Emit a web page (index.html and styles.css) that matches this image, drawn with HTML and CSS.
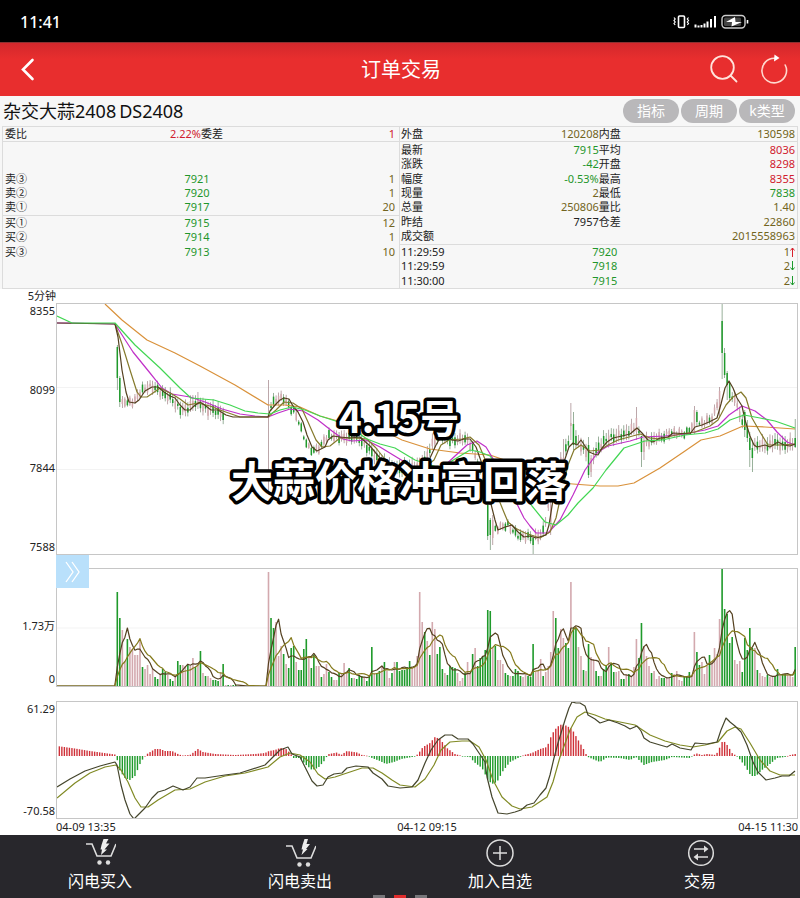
FILE: index.html
```html
<!DOCTYPE html>
<html lang="zh-CN">
<head>
    <meta charset="UTF-8">
    <meta name="viewport" content="width=device-width, initial-scale=1.0">
    <title>订单交易</title>
    <link rel="stylesheet" href="styles.css">
</head>
<body>
    <div class="status-bar">
        <span class="clock">11:41</span>
        <svg class="status-icons" width="76" height="16" viewBox="0 0 76 16" fill="none" stroke="#fff">
            <rect x="5.5" y="2" width="6" height="11.5" rx="1" stroke-width="1.6"/>
            <path d="M1 3.5l1.2 1.5L1 6.5 2.2 8 1 9.500l1.200 1.500M15.500 3.500L14.300 5l1.200 1.500L14.300 8l1.200 1.500-1.200 1.500" stroke-width="1.2"/>
            <path d="M22.500 13.500v-3M25.500 13.500v-2M28.500 13.500v-2.500M31.500 13.500V9.500M34.500 13.500V7.500M38 13.500V5M42 13.500V2" stroke-width="2"/>
            <rect x="49" y="1.500" width="23" height="12.500" rx="3.500" stroke="#ccc" stroke-width="1.4"/>
            <rect x="51" y="3.500" width="17" height="8.500" rx="1.500" fill="#444" stroke="none"/>
            <path d="M62 3l-9 5h6L58.500 12.500 69 8H62.500z" fill="#fff" stroke="none"/>
            <path d="M74.500 6v3.500" stroke-width="1.6"/>
        </svg>
    </div>

    <header class="title-bar">
        <button class="icon-btn" aria-label="返回">
            <svg width="32" height="32" viewBox="0 0 32 32" fill="none" stroke="#fff" stroke-width="2.6" stroke-linecap="round"><path d="M20.500 6L11 15.500l9.500 9.500"/></svg>
        </button>
        <h1>订单交易</h1>
        <div class="title-actions">
            <button class="icon-btn" aria-label="搜索">
                <svg width="32" height="32" viewBox="0 0 32 32" fill="none" stroke="#ffe4dc" stroke-width="1.8" stroke-linecap="round"><circle cx="14.500" cy="13.500" r="11.300"/><path d="M22.500 21.500l6 6"/></svg>
            </button>
            <button class="icon-btn" aria-label="刷新">
                <svg width="32" height="32" viewBox="0 0 32 32" fill="none" stroke="#ffd9cf" stroke-width="1.6" stroke-linecap="round"><path d="M17 4.300A12.300 12.300 0 1 0 27.200 11"/><path d="M16.500 .5l5 3.500-5.500 3.500z" fill="#fff" stroke="none"/></svg>
            </button>
        </div>
    </header>

    <div class="contract">
        <h2><span>杂交大蒜2408</span><span>DS2408</span></h2>
        <div class="pills">
            <button>指标</button>
            <button>周期</button>
            <button>k类型</button>
        </div>
    </div>

    <div class="quotes">
        <!-- order book -->
        <table class="book">
            <tr><th>委比</th><td class="red">2.22%</td><th>委差</th><td class="red">1</td></tr>
            <tr class="line"><td colspan="4">&nbsp;</td></tr>
            <tr><td colspan="4">&nbsp;</td></tr>
            <tr><th>卖③</th><td colspan="2" class="mid green">7921</td><td class="olive">1</td></tr>
            <tr><th>卖②</th><td colspan="2" class="mid green">7920</td><td class="olive">1</td></tr>
            <tr><th>卖①</th><td colspan="2" class="mid green">7917</td><td class="olive">20</td></tr>
            <tr class="line"><th>买①</th><td colspan="2" class="mid green">7915</td><td class="olive">12</td></tr>
            <tr><th>买②</th><td colspan="2" class="mid green">7914</td><td class="olive">1</td></tr>
            <tr><th>买③</th><td colspan="2" class="mid green">7913</td><td class="olive">10</td></tr>
            <tr><td colspan="4">&nbsp;</td></tr>
            <tr><td colspan="4">&nbsp;</td></tr>
        </table>
        <!-- market detail -->
        <table class="detail">
            <tr><th>外盘</th><td class="olive">120208</td><th>内盘</th><td class="olive">130598</td></tr>
            <tr class="line"><th>最新</th><td class="green">7915</td><th>平均</th><td class="red">8036</td></tr>
            <tr><th>涨跌</th><td class="green">-42</td><th>开盘</th><td class="red">8298</td></tr>
            <tr><th>幅度</th><td class="green">-0.53%</td><th>最高</th><td class="red">8355</td></tr>
            <tr><th>现量</th><td class="olive">2</td><th>最低</th><td class="green">7838</td></tr>
            <tr><th>总量</th><td class="olive">250806</td><th>量比</th><td class="olive">1.40</td></tr>
            <tr><th>昨结</th><td>7957</td><th>仓差</th><td class="olive">22860</td></tr>
            <tr><th>成交额</th><td colspan="3" class="olive">2015558963</td></tr>
            <tr class="line"><th>11:29:59</th><td colspan="2" class="mid green">7920</td><td class="olive">1<svg class="arrow" viewBox="0 0 5 10"><path d="M2.500 10V1M.5 3.500l2-2.500 2 2.500" stroke="#d8202c"/></svg></td></tr>
            <tr><th>11:29:59</th><td colspan="2" class="mid green">7918</td><td class="olive">2<svg class="arrow" viewBox="0 0 5 10"><path d="M2.500 0v9M.5 6.500l2 2.500 2-2.500" stroke="#1c9a2c"/></svg></td></tr>
            <tr><th>11:30:00</th><td colspan="2" class="mid green">7915</td><td class="olive">2<svg class="arrow" viewBox="0 0 5 10"><path d="M2.500 0v9M.5 6.500l2 2.500 2-2.500" stroke="#1c9a2c"/></svg></td></tr>
        </table>
    </div>

    <main class="charts">
        <div class="period">5分钟</div>
        <div class="chart price">
            <div class="axis"><span>8355</span><span>8099</span><span>7844</span><span>7588</span></div>
            <svg id="price" class="plot" viewBox="57 304 740 250" preserveAspectRatio="none"></svg>
            <button class="expand" aria-label="展开">
                <svg width="20" height="22" viewBox="0 0 20 22" fill="none" stroke="#fff" stroke-width="1.3"><path d="M3 1l7 10-7 10M9 1l7 10-7 10"/></svg>
            </button>
            <svg class="caption">
                <text class="date" x="50%" y="50">4.15号</text>
                <text x="50%" y="114">大蒜价格冲高回落</text>
            </svg>
        </div>
        <div class="chart volume">
            <div class="axis"><span>1.73万</span><span>0</span></div>
            <svg id="volume" class="plot" viewBox="57 569 740 117" preserveAspectRatio="none"></svg>
        </div>
        <div class="chart macd">
            <div class="axis"><span>61.29</span><span>-70.58</span></div>
            <svg id="macd" class="plot" viewBox="57 702 740 116" preserveAspectRatio="none"></svg>
        </div>
        <div class="times"><span>04-09 13:35</span><span>04-12 09:15</span><span>04-15 11:30</span></div>
    </main>

    <footer>
        <nav>
            <a href="#">
                <svg width="32" height="30" viewBox="0 0 32 30" fill="none" stroke="#ddd" stroke-width="1.6"><path d="M2 6h6l5 12h14l5-12"/><circle cx="15.500" cy="24.500" r="2.200" fill="#ddd" stroke="none"/><circle cx="24" cy="24.500" r="2.200" fill="#ddd" stroke="none"/><path d="M19.500 1h5l-2.500 4.500h3.500l-5 6h2.500L17 17l1-5.500h-1.500l1-4.500z" fill="#eee" stroke="none"/></svg>
                闪电买入
            </a>
            <a href="#">
                <svg width="32" height="30" viewBox="0 0 32 30" fill="none" stroke="#ddd" stroke-width="1.6"><path d="M2 8h6l5 12h14l5-12"/><circle cx="15.500" cy="26.500" r="2.200" fill="#ddd" stroke="none"/><circle cx="24" cy="26.500" r="2.200" fill="#ddd" stroke="none"/><path d="M20.500 1h3.500l-1.500 5h3.500l-4 5h1.500L17.500 17l1.500-5.500h-1.500l1-4.500z" fill="#eee" stroke="none"/></svg>
                闪电卖出
            </a>
            <a href="#">
                <svg width="32" height="30" viewBox="0 0 32 30" fill="none" stroke="#ddd" stroke-width="1.500"><circle cx="16" cy="15" r="13"/><path d="M9 15h14M16 8v14"/></svg>
                加入自选
            </a>
            <a href="#">
                <svg width="32" height="30" viewBox="0 0 32 30" fill="none" stroke="#ddd" stroke-width="1.500"><circle cx="17" cy="15" r="12.300"/><path d="M10 11h13M11 19h13"/><path d="M20 7.500l4.500 3.500-4.500 3.500zM14 15.500L9.500 19l4.500 3.500z" fill="#ddd" stroke="none"/></svg>
                交易
            </a>
        </nav>
        <div class="pages"><i></i><i class="on"></i><i></i></div>
    </footer>

    <script src="script.js"></script>
</body>
</html>
```
FILE: styles.css
```css
* {
    box-sizing: border-box;
}

body {
    margin: 0;
    min-height: 100vh;
    display: flex;
    flex-direction: column;
    background: #fff;
    color: #222;
    font-family: "Noto Sans", "Noto Sans CJK SC", sans-serif;
    font-size: 11px;
}

button {
    border: none;
    padding: 0;
    background: none;
    font-family: inherit;
    cursor: pointer;
}

/* Phone status bar */
.status-bar {
    height: 42px;
    padding: 2px 51px 0 20px;
    display: flex;
    justify-content: space-between;
    align-items: center;
    background: #000;
    color: #fff;
}

.clock {
    font-size: 16px;
    font-weight: 500;
}

/* Red title bar */
.title-bar {
    height: 54px;
    padding: 0 10px 0 12px;
    display: grid;
    grid-template-columns: 1fr auto 1fr;
    align-items: center;
    background: linear-gradient(#d2282c, #e82e2e 16px);
    border-top: 1px solid #8c3030;
    color: #fff;
}

.title-bar h1 {
    margin: 0;
    font-size: 20px;
    font-weight: 400;
    line-height: 30px;
}

.icon-btn {
    width: 32px;
    height: 32px;
}

.icon-btn svg {
    display: block;
}

.title-actions {
    display: flex;
    justify-content: flex-end;
    gap: 18px;
}

/* Contract name */
.contract {
    height: 30px;
    padding: 0 5px 0 3px;
    display: flex;
    justify-content: space-between;
    align-items: center;
    background: #f7f7f7;
}

.contract h2 {
    margin: 0;
    display: flex;
    gap: 3px;
    font-size: 18px;
    font-weight: 400;
    line-height: 24px;
    color: #111;
}

.pills {
    display: flex;
    gap: 2px;
}

.pills button {
    width: 56px;
    height: 24px;
    border-radius: 12px;
    background: #b9b8ba;
    color: #fff;
    font-size: 14px;
    line-height: 24px;
}

/* Quote tables */
.quotes {
    padding: 0 2px;
    display: grid;
    grid-template-columns: 1fr 1fr;
    background: #f7f7f7;
}

.quotes table {
    width: 100%;
    height: 163px;
    table-layout: fixed;
    border-collapse: collapse;
    border: 1px solid #dcdcdc;
    line-height: 14px;
}

.quotes .detail {
    border-left: none;
}

.quotes th,
.quotes td {
    padding: 0;
    font-weight: 400;
    text-align: right;
    white-space: nowrap;
}

.quotes th {
    text-align: left;
}

.book th:first-child {
    padding-left: 2px;
}

.detail th:first-child {
    padding-left: 1px;
}

.quotes td:last-child {
    padding-right: 2px;
}

.book td:last-child {
    padding-right: 4px;
}

.quotes .line {
    border-top: 1px solid #dcdcdc;
}

.quotes .mid {
    text-align: center;
}

.book .mid {
    padding-right: 8px;
}

.detail .mid {
    padding-left: 12px;
}

.arrow {
    width: 5px;
    height: 10px;
    fill: none;
    vertical-align: -1px;
}

.quotes .red {
    color: #d0202e;
}

.quotes .green {
    color: #1f962b;
}

.quotes .olive {
    color: #726420;
}

/* Charts */
.charts {
    padding-right: 2px;
}

.period {
    width: 56px;
    height: 14px;
    line-height: 14px;
    text-align: right;
}

.chart {
    position: relative;
    display: grid;
    grid-template-columns: 56px 1fr;
}

.plot {
    width: 100%;
    height: 100%;
    border: 1px solid #c6c6c6;
}

.axis {
    min-height: 0;
    padding-right: 1px;
    display: flex;
    flex-direction: column;
    justify-content: space-between;
    text-align: right;
    line-height: 16px;
}

.price {
    height: 252px;
    margin-bottom: 13px;
}

.volume {
    height: 119px;
    margin-bottom: 14px;
}

.volume .axis {
    padding-top: 50px;
}

.macd {
    height: 118px;
}

.times {
    height: 16px;
    padding-left: 56px;
    display: flex;
    justify-content: space-between;
    line-height: 16px;
}

.expand {
    position: absolute;
    left: 56px;
    top: 252px;
    width: 33px;
    height: 33px;
    background: #b9e0fb;
    z-index: 1;
}

.expand svg {
    display: block;
    margin: 0 auto;
}

/* Big caption over the price chart */
.caption {
    position: absolute;
    left: 0;
    top: 80px;
    width: 100%;
    height: 140px;
    font-family: "Noto Sans CJK SC", sans-serif;
    font-size: 42px;
    font-weight: 700;
    fill: #fff;
    stroke: #000;
    stroke-width: 7px;
    stroke-linejoin: round;
    paint-order: stroke;
    text-anchor: middle;
}

.caption .date {
    font-size: 39px;
}

/* Bottom navigation */
footer {
    flex: 1;
    min-height: 63px;
    display: flex;
    flex-direction: column;
    justify-content: space-between;
    background: #28272c;
}

nav {
    display: grid;
    grid-template-columns: repeat(4, 1fr);
    padding-top: 3px;
}

nav a {
    display: flex;
    flex-direction: column;
    align-items: center;
    color: #fff;
    font-size: 16px;
    line-height: 26px;
    text-decoration: none;
}

.pages {
    display: flex;
    justify-content: center;
    gap: 9px;
}

.pages i {
    width: 12px;
    height: 3px;
    background: #77767a;
}

.pages .on {
    background: #e02c2c;
}
```
FILE: script.js
```js
const SVG = "http://www.w3.org/2000/svg";
const STEP = 2.52;
const FIRST = 117.3;

const GREEN = "#1f9a2b";
const PINK = "#d3a9ae";

// one bar per 5 minutes, g = down, r = up
const volumes = (
    "g94 g68 r56 r25 g47 r39 r37 r31 r31 r46 g19 r17 r21 r12 r17 g9 g7 r12 g17 g14 r11 g7 g5 r9 g25 g21 r21 r20 g22 r20 " +
    "r28 g19 r23 g35 r13 g10 r10 r8 g6 g6 g5 r14 g22 r1 g1 r1 g1 g1 r0 g0 g0 g0 g0 g0 g0 g0 g0 g0 g0 g0 " +
    "r114 g68 g58 r64 r30 r40 g32 r22 g18 g38 g40 r24 g16 g16 g37 g47 r30 g18 g31 r20 r20 g9 r12 r22 g14 g9 r6 r6 g13 r13 " +
    "r23 r14 g18 g8 r8 g7 g11 g10 r9 g5 g10 g39 r13 g13 g15 r20 g24 r15 r8 g13 r24 g24 g15 g16 g16 g19 g25 r18 r20 r30 " +
    "r94 r64 g54 r45 g31 r64 r57 g32 g39 g17 r13 g11 g20 g19 g18 r13 r5 r8 g13 r24 r12 g32 r38 g20 g28 g30 g36 g76 g75 r38 " +
    "g40 r26 r26 r22 g13 g11 r10 g10 g17 g15 g10 r9 r12 g10 g9 g42 r14 r16 r27 g10 r14 r20 r34 r75 g68 g38 r57 r48 g43 g38 " +
    "r104 g58 g58 r39 r30 g16 r15 g42 r29 r27 g15 g10 r10 g17 g20 r39 g23 g14 r14 r15 g7 g7 r12 g12 r9 r19 r47 g28 g63 r40 " +
    "r30 r20 g13 r15 r7 r10 g8 g8 r8 r8 g13 r12 r15 r6 r5 g9 g10 g14 r10 r54 g34 g21 r24 r12 r20 g31 r25 r38 r32 r67 " +
    "g118 g77 g72 g43 g49 r26 r22 r25 g14 g48 g36 g58 g38 r38 g16 r13 r10 r9 g11 r9 r9 g10 g17 r10 g12 g12 r11 r11 r9 g39"
).split(" ").map(v => ({ up: v[0] === "r", size: Number(v.slice(1)) }));

const ma5 = "57,323 115,324 118,337 122,370 126,392 129,402 135,403 139,400 145,391 152,387 158,387 164,392 170,396 175,398 180,405 185,410 190,410 194,406 200,402 206,406 211,410 218,410 226,415 233,417 268,417 270,411 276,404 280,400 284,398 289,399 293,406 298,412 303,422 307,435 312,447 317,451 325,447 328,440 333,436 340,437 350,438 360,437 370,446 380,458 390,466 400,470 412,468 422,468 430,458 436,445 440,438 445,435 452,440 458,441 464,439 470,439 476,447 481,461 486,480 490,500 495,520 498,530 505,527 512,525 518,532 524,537 530,536 536,538 546,535 549,525 553,500 557,480 564,462 569,447 573,443 577,445 581,440 585,446 589,452 594,454 598,455 602,448 607,442 613,438 622,436 630,434 637,428 642,433 648,440 653,442 660,438 668,437 673,433 690,434 695,427 702,425 709,422 717,418 721,404 725,388 729,381 733,388 737,398 742,406 745,420 750,436 754,445 757,447 765,445 770,447 778,442 784,445 790,446 795,444";
const ma10 = "115,324 122,344 130,370 137,392 141,397 147,397 153,393 160,388 172,394 180,399 188,405 198,403 210,406 220,410 240,417 268,417 276,410 284,402 293,403 302,409 308,422 316,440 322,447 330,446 340,438 355,438 367,439 376,448 384,458 395,468 410,471 424,468 434,460 441,445 449,440 462,439 470,437 479,445 487,464 495,490 503,510 508,522 515,528 525,533 540,538 550,532 556,518 561,495 568,465 574,450 581,445 590,451 600,450 608,445 618,440 640,434 650,438 660,439 680,434 695,432 710,426 718,420 726,405 733,397 741,392 746,398 752,418 760,432 768,445 780,445 795,444";
const ma20 = "57,323 72,323 115,324 133,352 150,373 162,388 172,394 190,397 205,402 222,409 240,414 255,416 268,417 278,413 290,409 303,411 318,420 332,431 343,439 352,441 366,440 380,447 398,458 420,471 440,470 455,456 467,445 477,441 486,447 495,462 505,485 515,500 524,518 530,526 536,533 548,533 560,520 573,495 585,470 598,452 608,446 630,441 643,437 665,436 685,434 705,430 718,426 729,415 742,406 755,411 767,420 777,432 787,442 795,445";
const ma30 = "57,316 72,323 115,323 135,345 160,368 180,388 191,398 214,400 230,405 245,411 258,413 270,414 280,410 292,407 305,410 320,416 345,424 367,439 380,444 395,448 415,460 440,468 470,450 480,452 490,456 500,470 520,490 532,506 545,522 556,525 568,515 578,503 593,488 606,470 624,448 645,441 662,440 685,435 705,433 718,429 730,420 744,415 760,418 775,421 795,428";
const ma60 = "105,304 122,320 147,340 175,353 200,366 235,385 268,405 285,405 300,407 320,416 345,423 380,429 402,440 430,449 460,453 490,455 510,462 530,474 550,482 573,484 600,486 618,486 634,483 660,468 685,451 701,440 720,436 743,426 765,427 795,429";

const hist = "57,10 75,7.5 90,5 115,1.5 117,-3 120,-15 125,-22 130,-24 135,-20 140,-8 144,-1 147,2 155,7 160,7 165,5 172,5 178,2 182,0.5 190,1 198,7 203,4 215,2 235,1 255,2 265,3 269,5 275,6 280,8 285,8 288,5 291,2 293,-2 300,-2 305,-8 312,-14 318,-12 325,-4 327,0 329,2 337,3.5 341,1 347,5 357,3.5 362,1 369,0 372,-2 380,-5 386,-8 394,-6 401,-3 415,-0.5 418,2 423,9 430,13 435,19 440,17 447,8 455,2 464,-0.5 470,-1 474,-6 482,-12 488,-24 492,-28 497,-26 503,-15 510,-6 518,-2 524,1 532,3 540,7 547,9 552,22 557,29 562,32 567,30 572,27 577,18 583,8 586,2 588,-1 595,-4 600,-6 607,-1.5 620,-2 630,-4 636,-1 638,-3 644,-9 652,-6 665,-4 672,-1 690,-2 693,1 697,2.5 702,1 707,2 716,1 719,7 723,16 728,10 732,3 736,0.5 738,-1 745,-10 751,-20 756,-20 762,-14 770,-8 777,-2 785,-1 790,1 795,2";
const dif = "57,787 70,779 85,771 100,766 115,762 117,765 121,785 125,800 130,814 134,819 138,815 145,808 152,798 158,792 165,790 173,786 178,788 183,790 190,787 197,778 205,778 225,775 240,773 265,765 273,757 280,750 288,747 292,754 300,757 305,767 312,781 317,786 323,785 328,777 334,774 342,773 347,768 356,766 368,767 373,773 382,779 388,786 400,788 412,787 418,780 425,763 431,750 438,740 445,735 452,735 458,739 468,739 473,744 479,753 485,762 487,777 492,797 498,813 507,814 515,812 521,810 527,805 534,803 540,795 546,788 550,775 554,758 558,743 565,720 569,708 572,702 576,703 580,703 585,706 588,715 595,719 600,723 609,720 618,723 625,726 630,729 637,726 641,731 644,738 650,742 660,745 667,747 672,744 680,748 691,750 695,743 707,744 717,742 721,730 726,718 730,722 735,726 741,732 747,745 753,762 758,772 766,780 775,778 782,776 789,776 795,771";
const dea = "57,798 75,783 90,773 105,767 116,765 121,770 128,782 135,798 141,807 148,807 158,800 175,790 190,789 205,782 225,776 245,773 268,767 280,757 290,753 300,755 310,762 318,774 325,779 335,777 350,772 362,768 373,768 382,773 392,780 400,785 415,787 425,779 434,765 441,750 450,742 462,741 470,741 479,747 486,760 493,780 502,797 512,806 520,809 532,807 547,797 553,782 560,757 570,730 577,717 585,712 595,715 605,719 635,725 650,735 665,741 680,745 693,747 705,745 718,742 727,731 735,727 741,729 750,743 760,760 770,771 780,775 795,775";

// candles that leave the trend: [high, body top, body bottom, low]
const spikes = {
    0: [345, 347, 378, 390], 1: [376, 378, 402, 407], 2: [396, 399, 404, 408],
    60: [380, 416, 418, 495],
    146: [470, 480, 502, 504], 147: [500, 505, 536, 540], 148: [518, 520, 535, 550], 149: [515, 520, 538, 545],
    165: [535, 538, 545, 555], 172: [500, 505, 530, 535],
    177: [439, 458, 475, 480], 180: [403, 423, 426, 440], 181: [412, 424, 445, 450],
    187: [437, 445, 475, 478], 188: [455, 458, 472, 477],
    206: [407, 418, 432, 440], 208: [436, 436, 452, 467], 209: [438, 440, 452, 460],
    229: [406, 410, 432, 434], 230: [410, 412, 422, 426], 239: [387, 391, 410, 418],
    240: [303, 321, 353, 379], 241: [348, 353, 375, 378], 242: [371, 373, 385, 400], 243: [382, 383, 398, 402],
    249: [410, 412, 430, 437], 250: [420, 426, 438, 442], 251: [432, 438, 450, 467], 252: [440, 448, 458, 472],
    269: [419, 438, 447, 448]
};

function points(text) {
    return text.split(" ").map(p => p.split(",").map(Number));
}

function valueAt(list, x) {
    for (let i = 1; i < list.length; i++) {
        const [x0, y0] = list[i - 1];
        const [x1, y1] = list[i];
        if (x <= x1) return y0 + (y1 - y0) * (x - x0) / (x1 - x0);
    }
    return list[list.length - 1][1];
}

function draw(svg, name, attrs) {
    const el = document.createElementNS(SVG, name);
    for (const key in attrs) el.setAttribute(key, attrs[key]);
    svg.appendChild(el);
}

function line(svg, list, color) {
    draw(svg, "polyline", {
        points: list.map(p => p.join(",")).join(" "),
        fill: "none",
        stroke: color,
        "stroke-width": 1.2,
        "stroke-linejoin": "round"
    });
}

function bar(svg, x, top, bottom, width, color) {
    draw(svg, "rect", { x: x - width / 2, y: top, width, height: Math.max(bottom - top, 0.6), fill: color });
}

function grid(svg, y) {
    draw(svg, "path", { d: `M57 ${y}H797`, stroke: "#f3f3f3" });
}

function drawPrice() {
    const svg = document.getElementById("price");
    const trend = points(ma5);
    grid(svg, 387.5);
    grid(svg, 469.5);
    volumes.forEach((v, i) => {
        if (v.size < 2) return;
        const x = FIRST + i * STEP;
        const mid = valueAt(trend, x + 4) + Math.sin(i * 2.3) * 2;
        const half = 1 + Math.abs(Math.sin(i * 1.7)) * 3;
        const wick = 1 + Math.abs(Math.sin(i * 3.1)) * 5;
        const c = spikes[i] || [mid - half - wick, mid - half, mid + half, mid + half + wick * 0.7];
        bar(svg, x, c[0], c[3], 0.7, v.up ? "#a08286" : "#6d8f70");
        bar(svg, x, c[1], c[2], 1.5, v.up ? PINK : GREEN);
    });
    line(svg, points(ma60), "#d9913a");
    line(svg, points(ma20), "#c030c8");
    line(svg, points(ma10), "#857a2c");
    line(svg, trend, "#54401f");
    line(svg, points(ma30), "#42d653");
}

function average(i, n) {
    let sum = 0;
    for (let k = i - n + 1; k <= i; k++) sum += k < 0 ? 0 : volumes[k].size;
    return sum / n;
}

function drawVolume() {
    const svg = document.getElementById("volume");
    const base = 686;
    grid(svg, 628);
    volumes.forEach((v, i) => bar(svg, FIRST + i * STEP, base - v.size, base, 1.6, v.up ? PINK : GREEN));
    [[5, "#54401f"], [10, "#857a1c"]].forEach(([n, color]) => {
        const list = [[57, base], [FIRST - STEP, base]];
        volumes.forEach((v, i) => list.push([FIRST + i * STEP, base - average(i, n)]));
        line(svg, list, color);
    });
}

function drawMacd() {
    const svg = document.getElementById("macd");
    const zero = 756;
    const list = points(hist);
    for (let x = FIRST - 23 * STEP; x < 796; x += STEP) {
        const v = valueAt(list, x);
        bar(svg, x, v > 0 ? zero - v : zero, v > 0 ? zero : zero - v, 1.4, v > 0 ? "#cf3038" : GREEN);
    }
    line(svg, points(dea), "#808a24");
    line(svg, points(dif), "#44452c");
}

drawPrice();
drawVolume();
drawMacd();
```
